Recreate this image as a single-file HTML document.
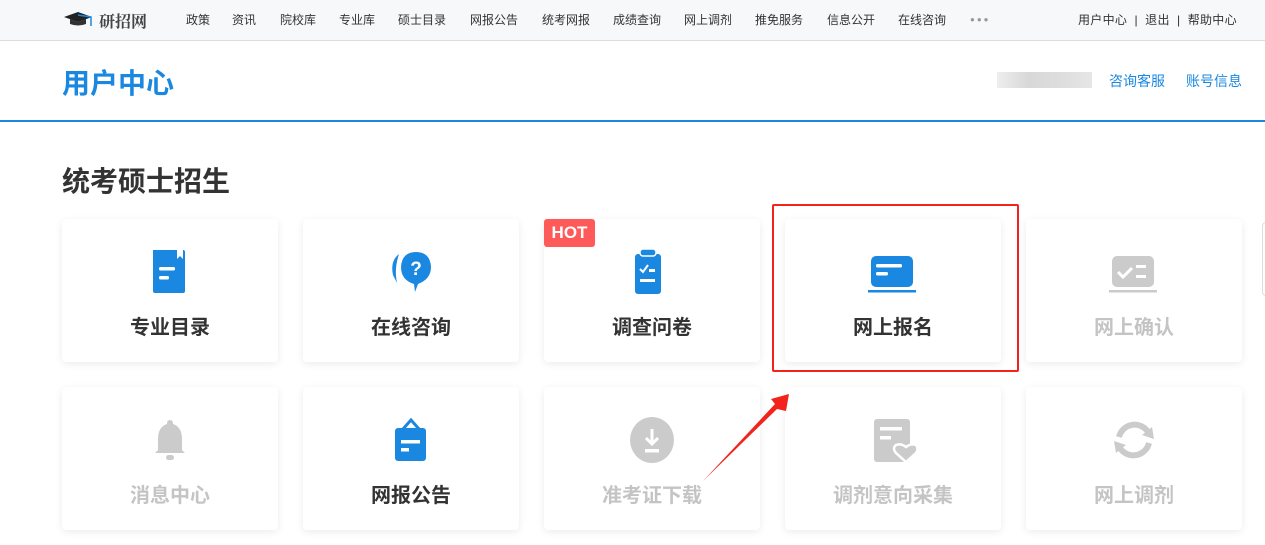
<!DOCTYPE html>
<html><head><meta charset="utf-8"><style>
*{margin:0;padding:0;box-sizing:border-box}
body{width:1265px;height:545px;overflow:hidden;background:#fff;font-family:"Liberation Sans","Noto Sans CJK SC",sans-serif;position:relative}
.top{position:absolute;left:0;top:0;width:1265px;height:41px;background:#f7f8fa;border-bottom:1px solid #dcdcdc}
.top span{position:absolute;top:13px;font-size:12px;color:#333;line-height:14px;white-space:nowrap}
.logo{position:absolute;left:99px;top:9px;font-size:16px;font-weight:bold;color:#444;font-family:"Liberation Serif","Noto Serif CJK SC",serif}
.h1{position:absolute;left:62px;top:62px;font-size:28px;font-weight:bold;color:#1a88e0;letter-spacing:0}
.bl{position:absolute;left:0;top:120px;width:1265px;height:2px;background:#1a88e0}
.rl{position:absolute;top:71px;font-size:14px;color:#1a88e0}
.sec{position:absolute;left:62px;top:160px;font-size:28px;font-weight:bold;color:#333}
.card{position:absolute;width:216px;height:143px;background:#fff;border-radius:4px;box-shadow:0 2px 8px rgba(0,0,0,.08)}
.card .t{position:absolute;left:0;width:100%;top:92px;text-align:center;font-size:20px;font-weight:bold;color:#333}
.card.g .t{color:#c4c4c4}
.card svg{position:absolute;left:83px;top:28px}
</style></head><body>
<div class="top">
<svg style="position:absolute;left:62px;top:12px" width="34" height="16" viewBox="0 0 34 16"><path d="M2 5 L16 0 L30 5 L16 10Z" fill="#222"/><path d="M8 7 L8 12 Q16 15 24 12 L24 7 L16 10Z" fill="#333"/><path d="M16 3 L29 5 L29 14" stroke="#1a88e0" stroke-width="1.5" fill="none"/></svg>
<div class="logo">研招网</div>
<span style="left:186px">政策</span><span style="left:232px">资讯</span><span style="left:280px">院校库</span><span style="left:339px">专业库</span><span style="left:398px">硕士目录</span><span style="left:470px">网报公告</span><span style="left:542px">统考网报</span><span style="left:613px">成绩查询</span><span style="left:684px">网上调剂</span><span style="left:755px">推免服务</span><span style="left:827px">信息公开</span><span style="left:898px">在线咨询</span><span style="left:970px;top:13px;color:#999;font-size:8px;letter-spacing:2px">●●●</span>
<span style="left:1078px;letter-spacing:0.3px">用户中心 &nbsp;|&nbsp; 退出 &nbsp;|&nbsp; 帮助中心</span>
</div>
<div class="h1">用户中心</div>
<div style="position:absolute;left:997px;top:72px;width:95px;height:16px;background:linear-gradient(90deg,#eee,#d8d8d8,#ddd,#e6e6e6)"></div>
<div class="rl" style="left:1109px">咨询客服</div><div class="rl" style="left:1186px">账号信息</div>
<div class="bl"></div>
<div class="sec">统考硕士招生</div>

<div class="card" style="left:62px;top:219px"><svg width="50" height="50" viewBox="0 0 50 50"><path d="M8 3 H32 V12 L35 9 L38 12 V3 Q40 3 40 5 V44 Q40 46 38 46 H10 Q8 46 8 44Z" fill="#1a88e0"/><rect x="14" y="20" width="16" height="3.5" rx="1.5" fill="#fff"/><rect x="14" y="29" width="10" height="3.5" rx="1.5" fill="#fff"/></svg><div class="t">专业目录</div></div>
<div class="card" style="left:303px;top:219px"><svg width="50" height="50" viewBox="0 0 50 50"><path d="M13 7 Q4 14 7 28 L11 36 Q8 22 13 7Z" fill="#1a88e0"/><path d="M30 5 Q44 5 45 20 Q45 32 32 37 L29 45 L28 37 Q15 33 15 20 Q16 5 30 5Z" fill="#1a88e0"/><text x="30" y="28" text-anchor="middle" font-size="19" font-weight="bold" fill="#fff" font-family="Liberation Sans">?</text></svg><div class="t">在线咨询</div></div>
<div class="card" style="left:544px;top:219px"><svg width="50" height="50" viewBox="0 0 50 50"><rect x="8" y="7" width="26" height="40" rx="3" fill="#1a88e0"/><rect x="13" y="2" width="16" height="7" rx="3" fill="#1a88e0" stroke="#fff" stroke-width="1.5"/><path d="M13 22 L16 25 L21 18" stroke="#fff" stroke-width="2" fill="none"/><rect x="22" y="22" width="6" height="3" fill="#fff"/><rect x="13" y="32" width="15" height="3" fill="#fff"/></svg><div class="t">调查问卷</div>
<div style="position:absolute;left:0;top:0;width:51px;height:28px;background:#ff5a5a;border-radius:3px;color:#fff;font-weight:bold;font-size:17px;text-align:center;line-height:28px">HOT</div></div>
<div class="card" style="left:785px;top:219px"><svg width="50" height="50" viewBox="0 0 50 50"><rect x="3" y="9" width="42" height="31" rx="5" fill="#1a88e0"/><rect x="8" y="17" width="26" height="3.5" rx="1.5" fill="#fff"/><rect x="8" y="25" width="12" height="3.5" rx="1.5" fill="#fff"/><rect x="0" y="43" width="48" height="2.5" fill="#1a88e0"/></svg><div class="t">网上报名</div></div>
<div class="card g" style="left:1026px;top:219px"><svg width="50" height="50" viewBox="0 0 50 50"><rect x="3" y="9" width="42" height="31" rx="5" fill="#cbcbcb"/><path d="M9 25 L14 30 L23 21" stroke="#fff" stroke-width="3" fill="none"/><rect x="27" y="18" width="10" height="3" fill="#fff"/><rect x="27" y="28" width="10" height="3" fill="#fff"/><rect x="0" y="43" width="48" height="2.5" fill="#cbcbcb"/></svg><div class="t">网上确认</div></div>

<div class="card g" style="left:62px;top:387px"><svg width="50" height="50" viewBox="0 0 50 50"><path d="M25 5 Q28 5 28 9 Q37 12 37 24 V35 L40 38 H10 L13 35 V24 Q13 12 22 9 Q22 5 25 5Z" fill="#cbcbcb"/><rect x="21" y="40" width="8" height="5" rx="2.5" fill="#cbcbcb"/></svg><div class="t">消息中心</div></div>
<div class="card" style="left:303px;top:387px"><svg width="50" height="50" viewBox="0 0 50 50"><path d="M17 14 L25 5 L33 14" stroke="#1a88e0" stroke-width="3" fill="none"/><rect x="9" y="13" width="31" height="33" rx="3" fill="#1a88e0"/><rect x="15" y="25" width="19" height="3.5" fill="#fff"/><rect x="15" y="33" width="8" height="3.5" fill="#fff"/></svg><div class="t">网报公告</div></div>
<div class="card g" style="left:544px;top:387px"><svg width="50" height="50" viewBox="0 0 50 50"><ellipse cx="25" cy="25" rx="22" ry="23" fill="#cbcbcb"/><path d="M25 14 V29 M19 23 L25 29 L31 23" stroke="#fff" stroke-width="3" fill="none"/><rect x="18" y="34" width="14" height="3.5" fill="#fff"/></svg><div class="t">准考证下载</div></div>
<div class="card g" style="left:785px;top:387px"><svg width="50" height="50" viewBox="0 0 50 50"><rect x="6" y="4" width="36" height="43" rx="3" fill="#cbcbcb"/><rect x="12" y="12" width="22" height="3.5" fill="#fff"/><rect x="12" y="21" width="11" height="3.5" fill="#fff"/><path d="M38 47 L28 38 Q24 33 28 30 Q33 28 38 32 Q43 28 48 30 Q51 34 48 38Z" fill="#cbcbcb" stroke="#fff" stroke-width="2.5"/></svg><div class="t">调剂意向采集</div></div>
<div class="card g" style="left:1026px;top:387px"><svg width="50" height="50" viewBox="0 0 50 50"><path d="M10 22 A16 16 0 0 1 39 17" stroke="#cbcbcb" stroke-width="6" fill="none"/><path d="M33 20 L45 24 L43 12Z" fill="#cbcbcb"/><path d="M40 28 A16 16 0 0 1 11 33" stroke="#cbcbcb" stroke-width="6" fill="none"/><path d="M17 30 L5 26 L7 38Z" fill="#cbcbcb"/></svg><div class="t">网上调剂</div></div>

<div style="position:absolute;left:1262px;top:222px;width:10px;height:74px;border:1px solid #ddd;border-radius:4px"></div>
<div style="position:absolute;left:772px;top:204px;width:247px;height:168px;border:2px solid #f2231c;border-radius:2px"></div>
<svg style="position:absolute;left:0;top:0" width="1265" height="545"><polygon points="703,481 777,409 786,411 789,394 771,399 775,404" fill="#f2231c"/></svg>
</body></html>
